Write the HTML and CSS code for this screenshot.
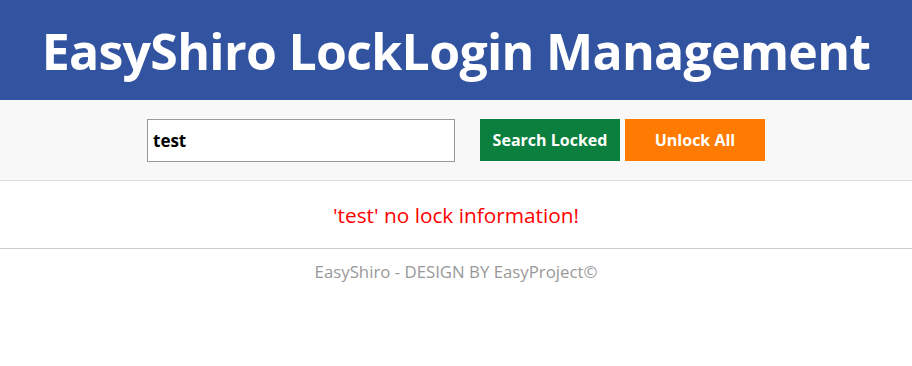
FILE: index.html
```html
<!DOCTYPE html>
<html>
<head>
<meta charset="utf-8">
<link rel="stylesheet" href="styles.css">
</head>
<body>
<header class="header"><h1 class="title">EasyShiro LockLogin Management</h1></header>
<section class="toolbar">
  <input class="search" type="text" value="test">
  <button class="btn btn-search">Search Locked</button>
  <button class="btn btn-unlock">Unlock All</button>
</section>
<section class="message">'test' no lock information!</section>
<footer class="footer">EasyShiro - DESIGN BY EasyProject©</footer>
</body>
</html>
```
FILE: styles.css
```css
* { box-sizing: border-box; }
body {
  margin: 0;
  font-family: "Open Sans", "Noto Sans", sans-serif;
  background: #fff;
}
.header {
  height: 100px;
  background: #3254a0;
  display: flex;
  align-items: center;
  justify-content: center;
}
.title {
  margin: 0;
  color: #fff;
  font-size: 50px;
  font-weight: 700;
  letter-spacing: -0.7px;
  line-height: 1;
  padding-top: 2px;
}
.toolbar {
  height: 81px;
  background: #f8f8f8;
  border-bottom: 1px solid #ddd;
  display: flex;
  align-items: center;
  justify-content: center;
}
.search {
  width: 308px;
  height: 43px;
  border: 1px solid #999;
  background: #fff;
  font-family: inherit;
  font-size: 17px;
  font-weight: 700;
  color: #000;
  padding: 0 5px;
  margin-right: 25px;
  outline: none;
}
.btn {
  width: 140px;
  height: 42px;
  border: none;
  color: #fff;
  font-family: inherit;
  font-size: 16px;
  font-weight: 700;
  padding: 0;
}
.btn-search { background: #0b7f3e; }
.btn-unlock { background: #ff7a00; margin-left: 5px; }
.message {
  height: 68px;
  border-bottom: 1px solid #ccc;
  display: flex;
  align-items: center;
  justify-content: center;
  color: #ff0000;
  font-size: 20.8px;
}
.footer {
  text-align: center;
  color: #999;
  font-size: 16.8px;
  padding-top: 11px;
}
```
